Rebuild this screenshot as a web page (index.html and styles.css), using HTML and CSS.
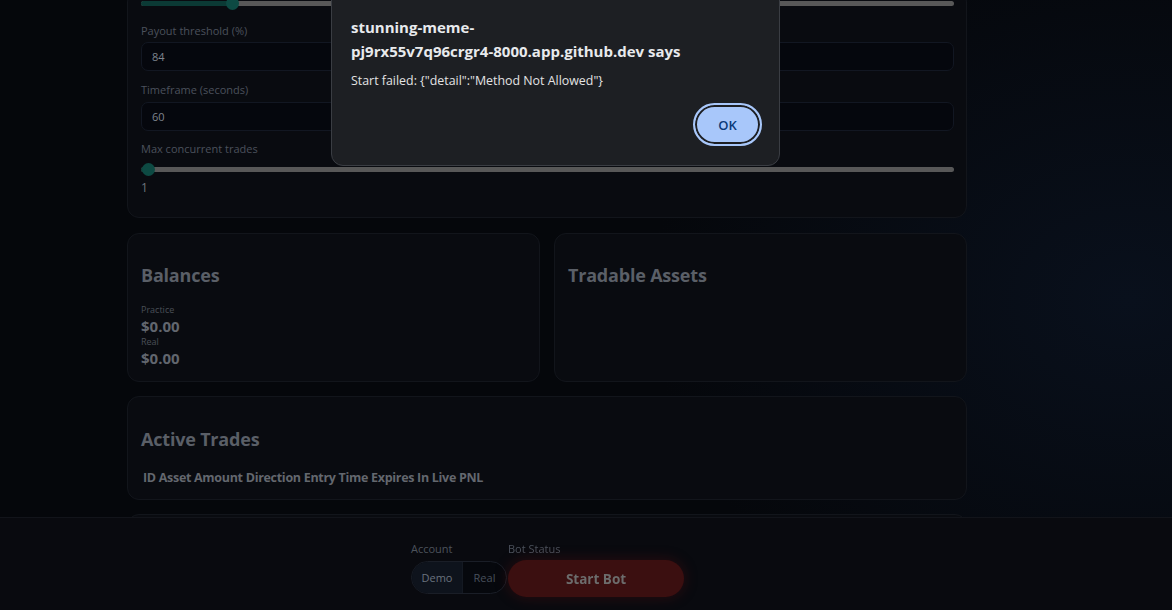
FILE: index.html
```html
<!DOCTYPE html>
<html lang="en">
<head>
<meta charset="utf-8">
<title>Trading Bot</title>
<link rel="stylesheet" href="styles.css">
</head>
<body>
<main class="main">
  <section class="card card-settings">
    <div class="slider"><div class="slider-fill" style="width: 91px"></div><div class="slider-thumb" style="left: 85px"></div></div>
    <div class="field field-first">
      <label class="field-label label-first">Payout threshold (%)</label>
      <div class="input">84</div>
    </div>
    <div class="field field-second">
      <label class="field-label">Timeframe (seconds)</label>
      <div class="input">60</div>
    </div>
    <div class="field field-third">
      <label class="field-label label-slider">Max concurrent trades</label>
      <div class="slider"><div class="slider-fill" style="width: 7px"></div><div class="slider-thumb" style="left: 1px"></div></div>
      <div class="slider-value">1</div>
    </div>
  </section>

  <div class="row">
    <section class="card card-half">
      <h2 class="card-title">Balances</h2>
      <div class="bal-label">Practice</div>
      <div class="bal-value">$0.00</div>
      <div class="bal-label">Real</div>
      <div class="bal-value">$0.00</div>
    </section>
    <section class="card card-half card-assets">
      <h2 class="card-title">Tradable Assets</h2>
    </section>
  </div>

  <section class="card card-trades">
    <h2 class="card-title title-trades">Active Trades</h2>
    <div class="table-head">ID Asset Amount Direction Entry Time Expires In Live PNL</div>
  </section>

  <section class="card card-next"></section>
</main>

<footer class="bottom-bar">
  <div class="bar-inner">
    <div class="bar-group">
      <div class="bar-label">Account</div>
      <div class="toggle">
        <span class="toggle-opt active">Demo</span>
        <span class="toggle-opt">Real</span>
      </div>
    </div>
    <div class="bar-group">
      <div class="bar-label">Bot Status</div>
      <button class="start-btn">Start Bot</button>
    </div>
  </div>
</footer>

<div class="dialog" role="alertdialog">
  <div class="dialog-title">stunning-meme-<br>pj9rx55v7q96crgr4-8000.app.github.dev says</div>
  <div class="dialog-msg">Start failed: {"detail":"Method Not Allowed"}</div>
  <div class="dialog-actions"><button class="ok-btn">OK</button></div>
</div>
</body>
</html>
```

FILE: styles.css
```css
* { box-sizing: border-box; }

html, body {
  margin: 0;
  height: 610px;
  overflow: hidden;
}

body {
  font-family: "Open Sans", "Noto Sans", sans-serif;
  background:
    radial-gradient(ellipse 480px 380px at 1130px 300px, #09101c 0%, rgba(9,16,28,0) 100%),
    #05070b;
  color: #6b7079;
  position: relative;
}

.main {
  width: 840px;
  margin: -10px 0 0 127px;
  display: flex;
  flex-direction: column;
  gap: 14px;
}

.card {
  background: #090b10;
  border: 1px solid #12151b;
  border-radius: 12px;
  padding: 14px 12px 14px 13px;
}

.card-settings {
  padding-top: 6px;
  padding-bottom: 22px;
  margin-bottom: 1px;
}

.slider {
  position: relative;
  height: 12px;
}
.slider::before {
  content: "";
  position: absolute;
  left: 0; right: 0; top: 4px;
  height: 5px;
  border-radius: 3px;
  background: #585858;
}
.slider-fill {
  position: absolute;
  left: 0; top: 4px;
  height: 5px;
  border-radius: 3px;
  background: #0b3a35;
}
.slider-thumb {
  position: absolute;
  top: 0;
  width: 13px; height: 13px;
  border-radius: 50%;
  background: #0d4a43;
}

.field-first { margin-top: 15px; }
.field-second { margin-top: 12px; }
.field-third { margin-top: 11px; }

.field-label {
  display: block;
  font-size: 11px;
  line-height: 14px;
  color: #4b515c;
  margin-bottom: 5px;
}
.label-first { margin-bottom: 4px; }
.label-slider { margin-bottom: 7px; }

.input {
  height: 29px;
  border: 1px solid #121722;
  border-radius: 7px;
  background: #05070d;
  font-size: 11px;
  line-height: 27px;
  padding-left: 10px;
  color: #7f848d;
  font-weight: 500;
}

.slider-value {
  margin-top: 6px;
  font-size: 12px;
  line-height: 14px;
  color: #6d737c;
}

.row {
  display: flex;
  gap: 14px;
}
.card-half {
  flex: 1;
  padding-bottom: 13px;
}

.card-title {
  margin: 16px 0 18px;
  font-size: 18px;
  line-height: 22px;
  font-weight: 700;
  color: #5a5f67;
  letter-spacing: -0.2px;
}

.bal-label {
  font-size: 9px;
  line-height: 12px;
  color: #4a4f57;
}
.bal-value {
  font-size: 15px;
  line-height: 20px;
  font-weight: 700;
  color: #61666e;
}

.title-trades { margin: 17px 0 20px; }
.card-trades { padding-bottom: 13px; }
.table-head {
  font-size: 12.5px;
  line-height: 16px;
  font-weight: 700;
  color: #63676e;
  padding-left: 2px;
  letter-spacing: -0.3px;
}

.card-next { height: 120px; }

.bottom-bar {
  position: fixed;
  left: 0; right: 0; bottom: 0;
  height: 93px;
  background: #090a0f;
  border-top: 1px solid #12141a;
  padding-top: 24px;
}
.bar-inner {
  width: 1095px;
  display: flex;
  justify-content: center;
  gap: 1px;
}
.bar-group {
  display: flex;
  flex-direction: column;
}
.bar-label {
  font-size: 11px;
  line-height: 14px;
  color: #4c525c;
  margin-bottom: 5px;
}
.toggle {
  display: flex;
  width: 96px;
  height: 33px;
  border: 1px solid #1a1e27;
  border-radius: 17px;
  overflow: hidden;
  background: #06080d;
}
.toggle-opt {
  flex: 1;
  display: flex;
  align-items: center;
  justify-content: center;
  font-size: 11px;
  color: #48505c;
}
.toggle-opt.active {
  flex: 0 0 51px;
  background: #0e131c;
  color: #6a727e;
  border-right: 1px solid #141922;
}

.start-btn {
  width: 176px;
  height: 37px;
  border: none;
  border-radius: 19px;
  background: #3b0f10;
  box-shadow: 0 0 14px rgba(110, 18, 18, 0.35);
  font-family: inherit;
  font-size: 13.5px;
  font-weight: 700;
  color: #6c6c6c;
  padding: 0;
  margin-top: -1px;
}

.dialog {
  position: absolute;
  left: 331px;
  top: -20px;
  width: 449px;
  height: 186px;
  background: #1d1f23;
  border: 1px solid #3a3d43;
  border-radius: 12px;
  padding: 34px 19px 0;
  color: #e3e3e3;
  font-family: "Open Sans", "Noto Sans", sans-serif;
}
.dialog-title {
  font-size: 15px;
  line-height: 24px;
  font-weight: 700;
  color: #e8eaed;
}
.dialog-msg {
  margin-top: 10px;
  font-size: 12.4px;
  line-height: 16px;
  color: #e3e3e3;
}
.dialog-actions {
  display: flex;
  justify-content: flex-end;
  margin-top: 14px;
}
.ok-btn {
  width: 69px;
  height: 43px;
  margin-right: -2px;
  border: 2px solid #a8c7fa;
  border-radius: 22px;
  background: #a8c7fa;
  box-shadow: inset 0 0 0 2px #1d1f23;
  font-family: inherit;
  font-size: 13px;
  font-weight: 600;
  color: #0b3a78;
  padding: 0;
}
```
